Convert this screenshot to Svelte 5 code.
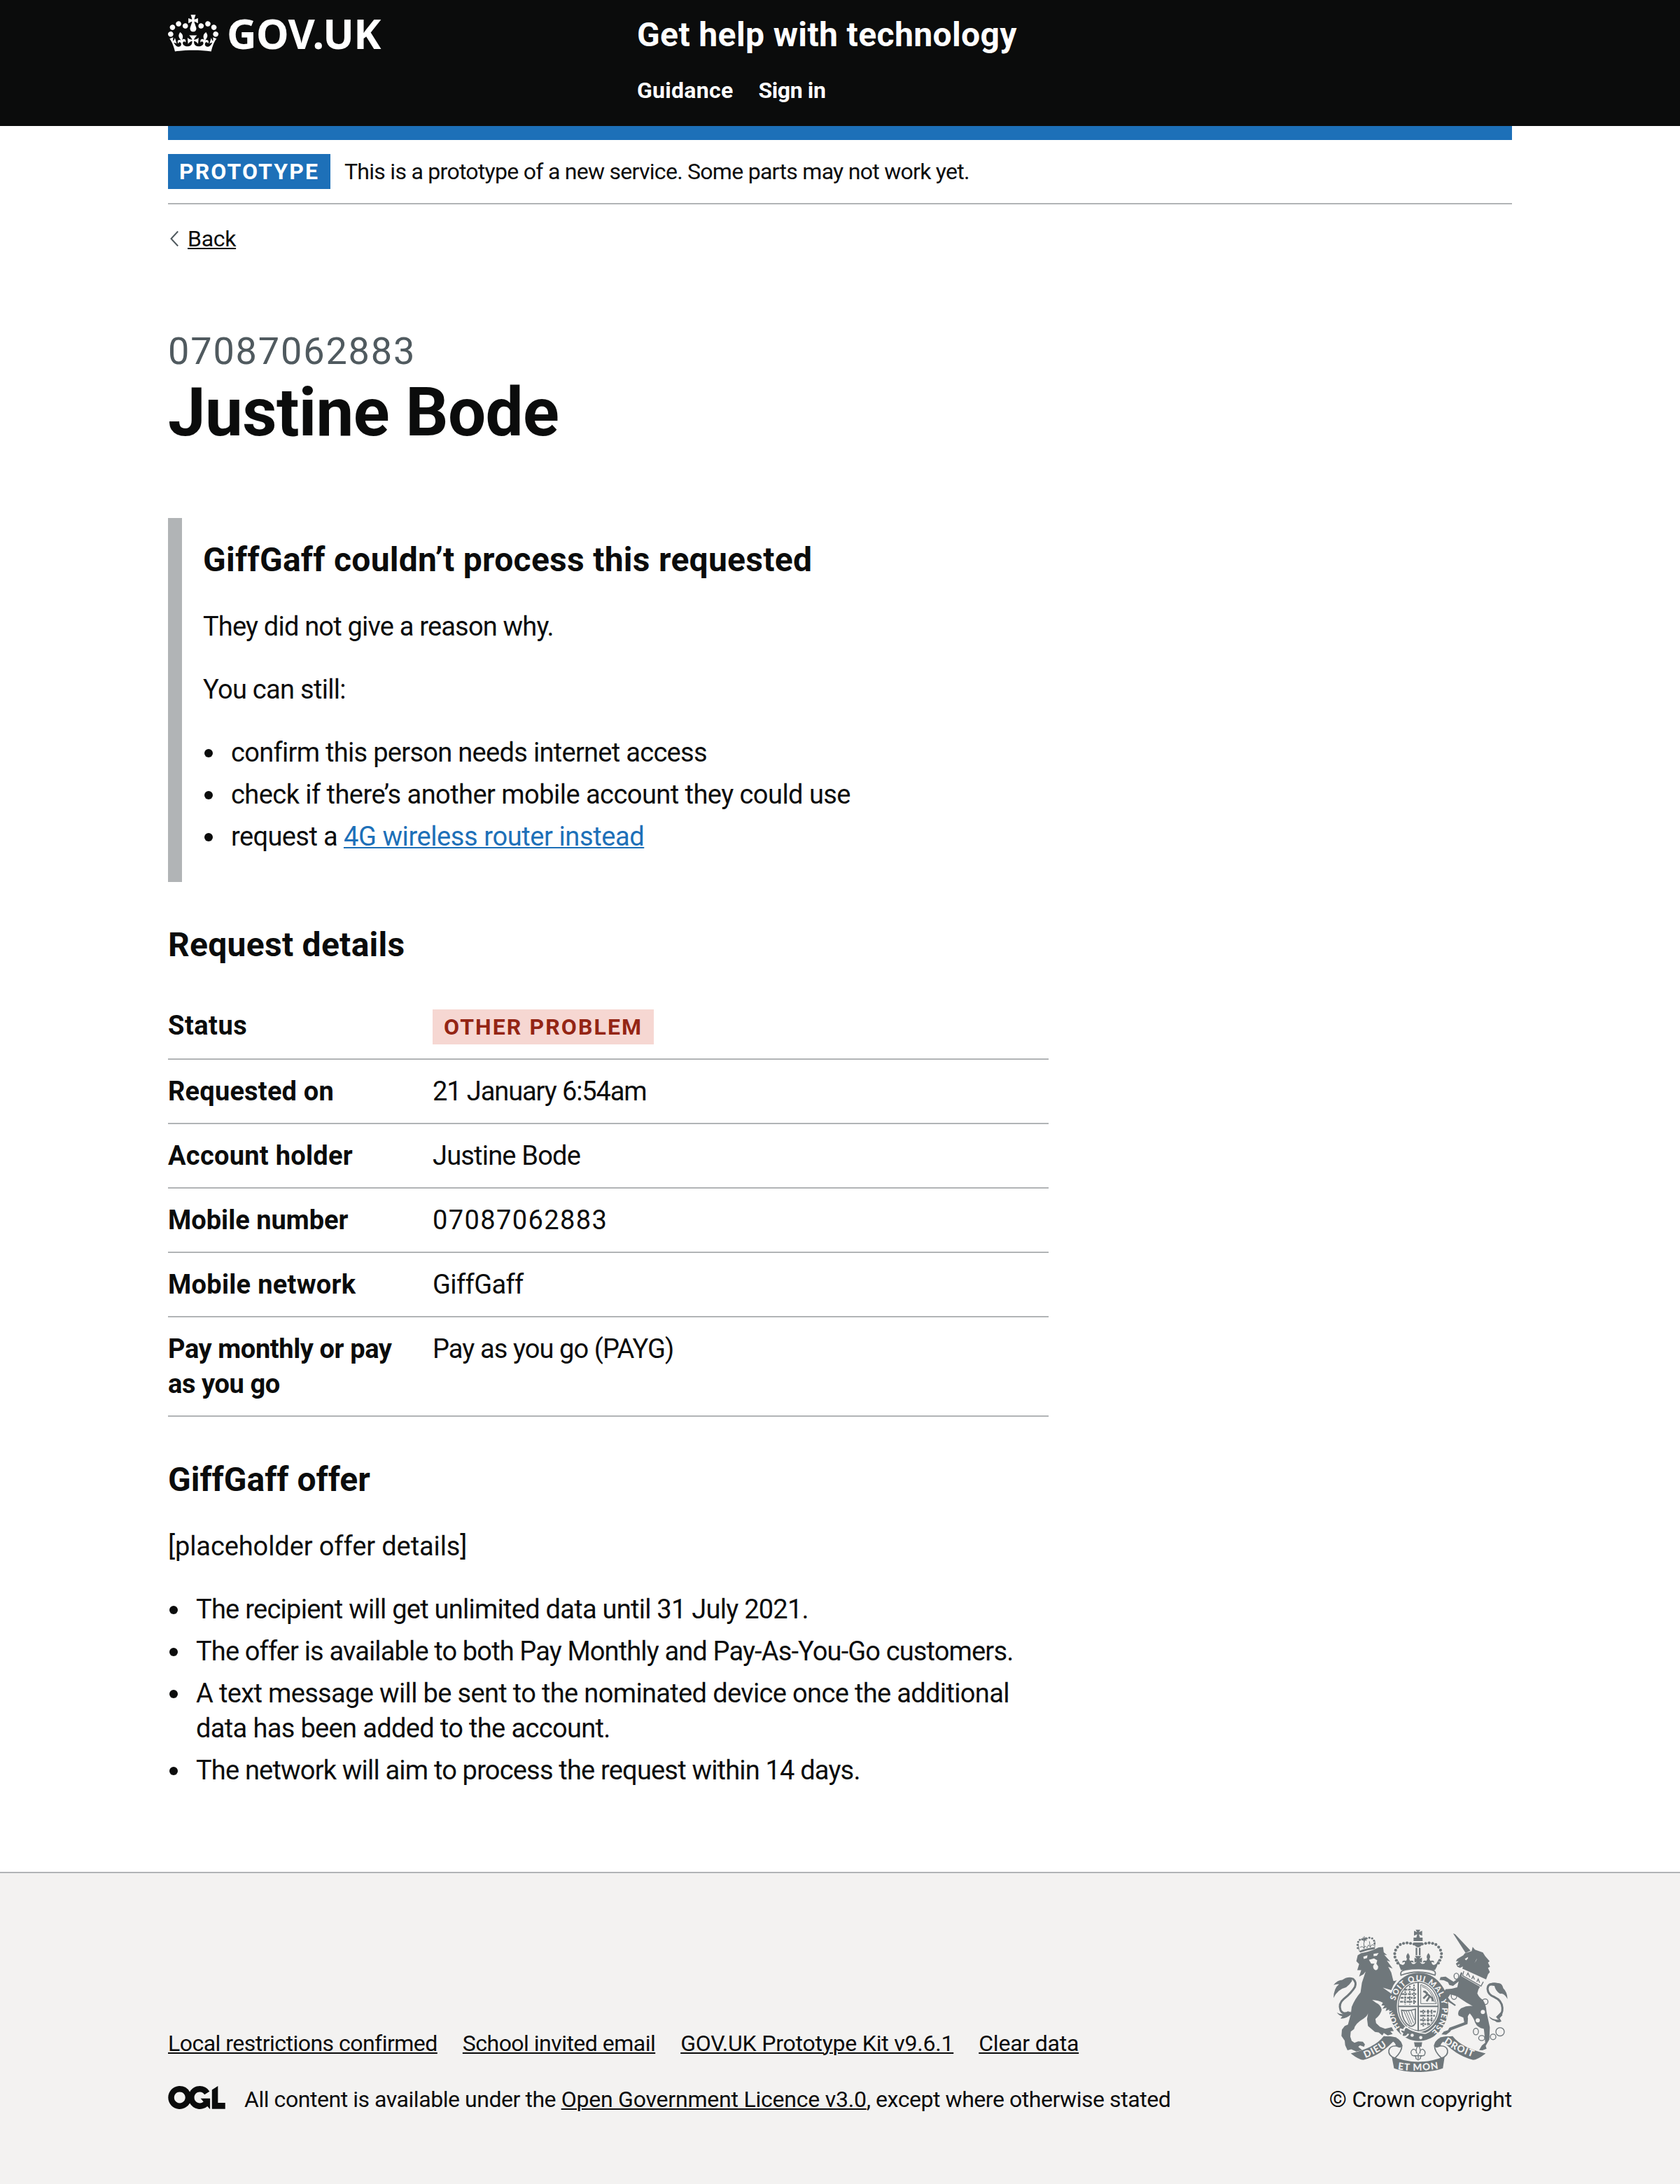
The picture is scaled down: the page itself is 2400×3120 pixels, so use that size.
<script>
  const stillOptions = [
    { text: 'confirm this person needs internet access', track: 'tight-7' },
    { text: 'check if there’s another mobile account they could use', track: 'tight-55' },
    { text: 'request a ', track: 'tight-6', link: '4G wireless router instead' }
  ];

  const details = [
    { key: 'Requested on', keyTrack: 'loose-2', value: '21 January 6:54am', track: 'tight-11' },
    { key: 'Account holder', keyTrack: 'loose-3', value: 'Justine Bode', track: 'tight-8' },
    { key: 'Mobile number', keyTrack: '', value: '07087062883', track: 'loose-14' },
    { key: 'Mobile network', keyTrack: 'loose-3', value: 'GiffGaff', track: 'tight-6' },
    { key: 'Pay monthly or pay as you go', keyTrack: 'tight-4', value: 'Pay as you go (PAYG)', track: 'tight-9' }
  ];

  const offer = [
    { text: 'The recipient will get unlimited data until 31 July 2021.', track: 'tight-75' },
    { text: 'The offer is available to both Pay Monthly and Pay-As-You-Go customers.', track: 'tight-85' },
    { text: 'A text message will be sent to the nominated device once the additional data has been added to the account.', track: 'tight-65' },
    { text: 'The network will aim to process the request within 14 days.', track: 'tight-8' }
  ];

  const footerLinks = [
    { text: 'Local restrictions confirmed', track: 'tight-5' },
    { text: 'School invited email', track: 'tight-5' },
    { text: 'GOV.UK Prototype Kit v9.6.1', track: 'tight-2' },
    { text: 'Clear data', track: 'tight-2' }
  ];

  // Pearls along the two arches of the imperial crown
  const pearls = [
    [420, 110], [405, 107], [390, 105], [375, 107], [361, 112], [349, 123], [341, 136], [337, 151], [338, 166], [344, 180], [350, 192]
  ];
  const lionPearls = [[178, 127], [177, 114], [180, 101], [187, 92], [197, 90], [216, 86], [228, 83], [240, 86], [248, 96], [250, 108]];
</script>

<header class="header">
  <div class="width header-inner">
    <a class="logo" href="#home">
      <svg class="crown" viewBox="0 0 132 97" aria-hidden="true">
        <path fill="currentColor" fill-rule="evenodd" d="M25 30.2c3.5 1.5 7.7-.2 9.1-3.7 1.5-3.6-.2-7.8-3.9-9.2-3.6-1.4-7.6.3-9.1 3.9-1.4 3.5.3 7.5 3.9 9zM9 39.5c3.6 1.5 7.8-.2 9.2-3.7 1.5-3.6-.2-7.8-3.9-9.1-3.6-1.5-7.6.2-9.1 3.8-1.4 3.5.3 7.5 3.8 9zM4.4 57.2c3.5 1.5 7.7-.2 9.1-3.8 1.5-3.6-.2-7.7-3.9-9.1-3.5-1.5-7.6.3-9.1 3.8-1.4 3.5.3 7.6 3.9 9.1zm38.3-21.4c3.5 1.5 7.7-.2 9.1-3.8 1.5-3.6-.2-7.7-3.9-9.1-3.6-1.5-7.6.3-9.1 3.8-1.3 3.6.4 7.7 3.9 9.1zm64.4-5.6c-3.6 1.5-7.8-.2-9.1-3.7-1.5-3.6.2-7.8 3.8-9.2 3.6-1.4 7.7.3 9.2 3.9 1.3 3.5-.4 7.5-3.9 9zm15.9 9.3c-3.6 1.5-7.7-.2-9.1-3.7-1.5-3.6.2-7.8 3.7-9.1 3.6-1.5 7.7.2 9.2 3.8 1.5 3.5-.3 7.5-3.8 9zm4.7 17.7c-3.6 1.5-7.8-.2-9.2-3.8-1.5-3.6.2-7.7 3.9-9.1 3.6-1.5 7.7.3 9.2 3.8 1.3 3.5-.4 7.6-3.9 9.1zM89.3 35.8c-3.6 1.5-7.8-.2-9.2-3.8-1.4-3.6.2-7.7 3.9-9.1 3.6-1.5 7.7.3 9.2 3.8 1.4 3.6-.3 7.7-3.9 9.1zM69.7 17.7l8.9 4.7V9.3l-8.9 2.8c-.2-.3-.5-.6-.9-.9L72.4 0H59.6l3.5 11.2c-.3.3-.6.5-.9.9l-8.8-2.8v13.1l8.8-4.7c.3.3.6.7.9.9l-5 15.4v.1c-.2.8-.4 1.6-.4 2.4 0 4.1 3.1 7.5 7 8.1h.2c.3 0 .7.1 1 .1.4 0 .7 0 1-.1h.2c4-.6 7.1-4.1 7.1-8.1 0-.8-.1-1.7-.4-2.4V34l-5.1-15.4c.4-.2.7-.6 1-.9zM66 92.8c16.9 0 32.8 1.1 47.1 3.2 4-16.9 8.9-26.7 14-33.5l-9.6-3.4c1 4.9 1.1 7.2 0 10.2-1.5-1.4-3-4.3-4.2-8.7L108.6 76c2.8-2 5-3.2 7.5-3.3-4.4 9.4-10 11.9-13.6 11.2-4.3-.8-6.3-4.6-5.6-7.9 1-4.7 5.7-5.9 8-.5 4.3-8.7-3-11.4-7.6-8.8 7.1-7.2 7.9-13.5 2.1-21.1-8 6.1-8.1 12.3-4.5 20.8-4.7-5.4-12.1-2.5-9.5 6.2 3.4-5.2 7.9-2 7.2 3.1-.6 4.3-6.4 7.8-13.5 7.2-10.3-.9-10.9-8-11.2-13.8 2.5-.5 7.1 1.8 11 7.3L80.2 60c-4.1 4.4-8 5.3-12.3 5.4 1.4-4.4 8-11.6 8-11.6H55.5s6.4 7.2 7.9 11.6c-4.2-.1-8-1-12.3-5.4l1.4 16.4c3.9-5.5 8.5-7.7 10.9-7.3-.3 5.8-.9 12.8-11.1 13.8-7.2.6-12.9-2.9-13.5-7.2-.7-5 3.8-8.3 7.1-3.1 2.7-8.7-4.6-11.6-9.4-6.2 3.7-8.5 3.6-14.7-4.6-20.8-5.8 7.6-5 13.9 2.2 21.1-4.7-2.6-11.9.1-7.7 8.8 2.3-5.5 7.1-4.2 8.1.5.7 3.3-1.3 7.1-5.7 7.9-3.5.7-9-1.8-13.5-11.2 2.5.1 4.7 1.3 7.5 3.3l-4.7-15.4c-1.2 4.4-2.7 7.2-4.3 8.7-1.1-3-.9-5.3 0-10.2l-9.5 3.4c5 6.9 9.9 16.7 14 33.5 14.8-2.1 30.8-3.2 47.7-3.2z" />
      </svg>
      <span class="logotype">GOV.UK</span>
    </a>
    <div class="header-content">
      <a class="service" href="#service">Get help with technology</a>
      <nav class="nav">
        <a class="loose-3" href="#guidance">Guidance</a>
        <a class="tight-4" href="#signin">Sign in</a>
      </nav>
    </div>
  </div>
</header>

<div class="width">
  <div class="bar"></div>
  <div class="phase">
    <strong class="tag">Prototype</strong>
    <span class="phase-text">This is a prototype of a new service. Some parts may not work yet.</span>
  </div>
  <a class="back" href="#back">
    <svg class="caret" viewBox="0 0 12 22" aria-hidden="true"><path d="M11.2 .5L1.5 11l9.7 10.5" fill="none" stroke="#505a5f" stroke-width="2" /></svg>
    <span>Back</span>
  </a>

  <main class="main">
    <span class="caption">07087062883</span>
    <h1>Justine Bode</h1>

    <section class="inset">
      <h2 class="loose-3">GiffGaff couldn’t process this requested</h2>
      <p class="tight-8">They did not give a reason why.</p>
      <p class="tight-7">You can still:</p>
      <ul>
        {#each stillOptions as item}
          <li class={item.track}><span>{item.text}{#if item.link}<a class="link tight-4" href="#router">{item.link}</a>{/if}</span></li>
        {/each}
      </ul>
    </section>

    <h2 class="loose-3">Request details</h2>
    <dl>
      <div class="row">
        <dt class="loose-5">Status</dt>
        <dd><strong class="tag tag-red">Other problem</strong></dd>
      </div>
      {#each details as d}
        <div class="row">
          <dt class={d.keyTrack}>{d.key}</dt>
          <dd class={d.track}>{d.value}</dd>
        </div>
      {/each}
    </dl>

    <h2>GiffGaff offer</h2>
    <p class="tight-1">[placeholder offer details]</p>
    <ul>
      {#each offer as item}
        <li class={item.track}><span>{item.text}</span></li>
      {/each}
    </ul>
  </main>
</div>

<footer class="footer">
  <div class="width footer-inner">
    <div class="meta">
      <nav class="meta-links">
        {#each footerLinks as l}
          <a class={l.track} href="#meta">{l.text}</a>
        {/each}
      </nav>
      <div class="licence">
        <svg class="ogl" viewBox="0 0 483.2 195.7" aria-hidden="true">
          <path fill="currentColor" d="M421.5 142.8V.1l-50.7 32.3v161.1h112.4v-50.7zm-122.3-9.6A47.12 47.12 0 0 1 221 97.8c0-26 21.1-47.1 47.1-47.1 16.7 0 31.4 8.7 39.7 21.8l42.7-27.2A97.63 97.63 0 0 0 268.1 0c-36.5 0-68.3 20.1-85.1 49.7A98 98 0 0 0 97.8 0C43.9 0 0 43.9 0 97.8s43.9 97.8 97.8 97.8c36.5 0 68.3-20.1 85.1-49.7a97.76 97.76 0 0 0 149.6 25.4l19.4 22.2h3v-87.8h-80l24.3 27.5zM97.8 145c-26 0-47.1-21.1-47.1-47.1s21.1-47.1 47.1-47.1 47.1 21.1 47.1 47.1S123.8 145 97.8 145" />
        </svg>
        <span class="tight-45">{'All content is available under the '}<a class="tight-2" href="#ogl">Open Government Licence v3.0</a>, except where otherwise stated</span>
      </div>
    </div>

    <a class="copyright" href="#copyright">
      <svg class="arms" viewBox="72 46 750 614" aria-hidden="true">
        <defs>
          <path id="garter" d="M360 468A103 120 0 1 1 500 484" />
          <path id="dieu" d="M211 600Q270 578 330 528" />
          <path id="mon" d="M350 648Q437 662 540 643" />
          <path id="droit" d="M547 533Q602 574 700 606" />
        </defs>

        <g fill="#6f777b">
          <!-- lion -->
          <path d="M192 149Q238 140 268 124L287 123 290 145 304 157 292 156 318 185 303 181 328 215 309 208 322 232 331 268Q336 270 346 265Q330 285 322 308L286 297 321 322Q342 350 350 380Q350 400 340 408L326 400 314 406 316 390 298 398 302 384 284 388 294 374 280 374 286 362Q268 352 240 350L256 362Q278 372 281 392Q278 412 254 432L257 450 274 466 296 474 324 467 333 484 318 485 328 497 307 503 290 492 284 503 268 490 252 488 222 462 218 432 224 400Q224 416 204 430Q166 452 162 476L148 486 146 508 152 526 164 534 180 528 200 530 209 541 205 552 188 546 180 552 197 566 172 572 150 562 134 567 124 545 122 525 108 505 110 478 122 462 136 456 148 412 152 380Q166 346 190 318L196 276 212 228 202 240 184 250 193 222 176 222 184 196 172 184 178 158Z" />
          <path d="M74 342Q74 300 98 282Q84 282 74 286Q92 262 116 264Q140 264 148 256L154 268Q142 286 128 296Q92 304 74 342Z" />
          <path d="M88 404Q112 420 146 400L152 410Q128 432 104 430L112 420Q98 418 88 404Z" />
          <path d="M183 140Q218 126 254 123L251 127 253 131Q218 135 189 146Z" />
        </g>
        <path d="M112 270Q134 252 158 260Q174 274 166 294Q152 318 118 346Q94 366 104 394Q114 416 140 402" fill="none" stroke="#6f777b" stroke-width="9" />
        <g fill="#6f777b">
          <path d="M184 138L180 108M251 122L252 98M204 104L206 130M228 98L232 124M188 124L198 120 204 128 210 118 218 126 224 114 232 122 240 112 248 116M206 76V104" fill="none" stroke="#6f777b" stroke-width="3" />
          {#each lionPearls as [x, y]}<circle cx={x} cy={y} r="4.5" />{/each}
          <path d="M198 80L206 84 214 80 212 88 218 96 208 94 206 104 202 94 194 94 202 89Z" />

          <!-- imperial crown -->
          <path d="M427 48H447L441 59 455 53V74L441 68 445 82H457V97H418V82H430L434 68 420 74V53L433 59Z" />
          <path d="M418 103H457Q453 122 438 124Q422 122 418 103Z" />
          <path d="M427 126H434V158H427zM441 126H448V158H441z" />
          {#each pearls as [x, y]}<circle cx={x} cy={y} r="6.3" /><circle cx={875 - x} cy={y} r="6.3" />{/each}
          <path d="M347 174L360 196 372 200Q384 196 380 186L370 190Q368 178 386 182L390 174Q382 162 394 148Q406 162 399 174L403 182Q420 178 418 190L408 187Q410 200 424 194L432 186 422 190V168L432 174 424 161H451L443 174 454 168V190L444 186 452 194Q466 198 468 187L458 190Q458 178 473 182L477 174Q470 162 482 148Q494 162 486 174L490 182Q508 178 506 190L496 186Q494 198 506 200L516 194 529 172 518 207 510 222Q437 208 364 222L358 208Z" />

          <!-- garter -->
          <ellipse cx="440" cy="380" rx="128" ry="147" />
        </g>
        <path d="M364 244Q358 224 384 220Q438 212 492 220Q518 224 510 244Q438 216 364 244Z" fill="#f3f2f1" stroke="#6f777b" stroke-width="5" />
        <ellipse cx="438" cy="378" rx="90" ry="108" fill="#6f777b" stroke="#f3f2f1" stroke-width="4" />
        <ellipse cx="438" cy="378" rx="84" ry="102" fill="#f3f2f1" />
        <g fill="none" stroke="#6f777b" stroke-width="6">
          <path d="M438 274V484M352 378H524" />
          <path stroke-width="7" stroke-dasharray="13 3 8 4" d="M378 306H428M366 325H430M362 341H428M360 358H430M446 400H514M446 418H510M446 436H504M448 454H492" />
          <path stroke-width="6" stroke-dasharray="7 4" d="M382 302V370M402 290V370M420 284V370M460 392V464M480 392V460M496 392V450" />
          <path stroke-width="3" d="M450 284Q502 298 516 366H449V284M454 292Q494 304 508 360" />
          <path stroke-width="8" d="M460 344L478 326 466 312M478 326L498 342 500 356M488 334L474 356M460 312L478 322" />
          <path stroke-width="5" d="M364 394Q398 400 426 390V450Q414 470 398 460Q372 444 366 394" />
          <path stroke-width="3" d="M376 398L402 456M386 398L410 456M396 397L418 450M408 395L422 436" />
        </g>

        <!-- garter buckle and pendant -->
        <path d="M396 468Q378 464 376 480L362 476Q360 490 370 494L366 506Q386 514 396 496" fill="none" stroke="#f3f2f1" stroke-width="7" />
        <path d="M470 494Q500 480 514 458M396 472Q430 492 470 494" fill="none" stroke="#f3f2f1" stroke-width="5" />
        <g fill="#f3f2f1"><circle cx="412" cy="502" r="7" /><circle cx="449" cy="512" r="7" /></g>
        <text class="motto garter"><textPath href="#garter">HON</textPath></text>
        <text class="motto garter wide"><textPath href="#garter" startOffset="120">SOIT QUI MAL Y PENSE</textPath></text>
        <path d="M326 396L316 408 330 404 342 408 338 394Z" fill="#6f777b" />
        <path d="M420 532H455L452 552H424Z" fill="#6f777b" />
        <path d="M438 546Q452 562 444 580Q446 562 458 562Q474 572 464 588L458 590Q446 590 448 602L438 608 428 602Q430 590 418 590L412 588Q400 572 416 562Q430 562 432 580Q424 562 438 546ZM420 590H456M438 580V604" fill="#f3f2f1" stroke="#6f777b" stroke-width="4" />

        <g fill="#6f777b">
          <!-- unicorn -->
          <path d="M588 64L597 68 663 138 642 148Z" />
          <path d="M638 150L668 140 672 122 682 134 716 146 726 162 745 184 738 190 747 208 738 212 746 230 738 240 730 262 634 218 Q688 196 690 172Q680 204 640 219L628 217 630 206 618 212 607 208 600 194 612 184 600 184 606 174 632 158Z" />
          <path d="M622 230L706 290Q694 306 692 322Q700 340 716 350Q730 370 732 402L740 440 746 468 744 520 728 548 732 560 714 567 700 566 712 546 726 534 722 490 720 474Q692 470 682 446Q678 430 660 408Q648 420 652 430L650 454 580 480 574 488 558 500 538 498 548 486 566 480 572 470 636 446 632 426 612 418Q604 402 622 386Q646 374 672 376L646 362 604 334 576 326 566 340 576 354 600 372 596 376 580 366 560 354 554 330 548 318 556 304 582 302 606 296 612 270 588 290 572 286 566 274 548 266 530 264 534 252 556 250 574 262 590 272 612 256Z" />
          <path d="M740 290Q752 270 780 278Q798 276 804 300Q820 314 822 346Q806 318 790 324Q770 312 766 290Q752 286 740 290Z" />
          <path d="M742 420Q762 438 784 434Q782 426 772 424L796 400 800 416 788 428 796 442Q780 452 768 440Q748 436 742 420Z" />
        </g>
        <path d="M772 284Q738 274 736 302Q738 328 766 338Q798 352 800 384Q802 412 778 430" fill="none" stroke="#6f777b" stroke-width="9" />
        <g fill="#f3f2f1">
          <path d="M246 152L268 148 260 160 246 162ZM202 164L220 158 218 170 204 174ZM226 178L248 172 262 180 258 194 266 206Q266 222 254 222 244 218 244 204L250 194 236 194Z" />
          <path d="M638 174L652 166 652 172 644 180ZM606 200L618 196 612 204Z" />
        </g>
        <path d="M632 224L624 248 708 296 722 272L712 268 704 280 698 262 686 272 680 254 668 262 664 244 650 250 646 232Z" fill="#f3f2f1" />
        <path d="M634 226L629 246 708 291 718 272M646 246L652 234 660 252M668 260L674 248 680 262M690 272L696 260 702 276" fill="none" stroke="#6f777b" stroke-width="4" />

        <!-- chain -->
        <g fill="none" stroke="#6f777b" stroke-width="4">
          <ellipse cx="602" cy="248" rx="10" ry="13" />
          <ellipse cx="592" cy="332" rx="12" ry="16" />
          <circle cx="726" cy="358" r="12" />
          <ellipse cx="686" cy="486" rx="11" ry="14" />
          <ellipse cx="711" cy="514" rx="13" ry="11" />
          <circle cx="760" cy="509" r="12" />
          <circle cx="790" cy="487" r="18" />
        </g>
        <g fill="#f3f2f1"><circle cx="716" cy="402" r="9" /><circle cx="694" cy="438" r="9" /></g>

        <!-- motto ribbon -->
        <g fill="#6f777b">
          <path d="M148 580Q250 558 290 506L346 512Q280 590 202 608Q184 608 148 580Z" />
          <path d="M728 580Q626 558 586 506L530 512Q596 590 674 608Q692 608 728 580Z" />
          <path d="M324 592Q438 640 552 592L544 644Q500 660 438 660Q374 660 334 644Z" />
        </g>
        <g fill="#f3f2f1" stroke="#6f777b" stroke-width="5">
          <path d="M326 512Q360 514 368 546Q368 574 338 600Q308 590 312 566Q318 546 344 548Q346 526 326 512Z" />
          <path d="M550 512Q516 514 508 546Q508 574 538 600Q568 590 564 566Q558 546 532 548Q530 526 550 512Z" />
        </g>
        <path d="M290 508Q354 498 370 546Q366 562 344 550Q340 530 318 524ZM586 508Q522 498 506 546Q510 562 532 550Q536 530 558 524Z" fill="#6f777b" />
        <g class="motto" fill="#f3f2f1">
          <text><textPath href="#dieu">DIEU</textPath></text>
          <text><textPath href="#mon">ET MON</textPath></text>
          <text><textPath href="#droit">DROIT</textPath></text>
        </g>
      </svg>
      <span class="tight-2">© Crown copyright</span>
    </a>
  </div>
</footer>

<style>
  :global(body) {
    margin: 0;
    background: #fff;
    color: #0b0c0c;
    font-family: Roboto, 'Liberation Sans', sans-serif;
    font-size: 38px;
    line-height: 50px;
  }
  a { color: inherit; text-decoration: none; }
  h1, h2, p, ul, dl, dd { margin: 0; padding: 0; }
  .width { width: 1920px; margin: 0 auto; }

  .header { background: #0b0c0c; color: #fff; height: 180px; }
  .header-inner { display: flex; font-weight: 700; }
  .logo { display: flex; width: 670px; padding-top: 17px; box-sizing: border-box; }
  .crown { width: 72px; height: 53px; margin: 4px 12px 0 0; }
  .logotype { font-family: 'Noto Sans', sans-serif; font-size: 59px; line-height: 60px; letter-spacing: -0.6px; }
  .header-content { padding-top: 20px; }
  .service { display: block; font-size: 48px; line-height: 60px; letter-spacing: 0.38px; }
  .nav { display: flex; gap: 36px; margin-top: 29px; font-size: 32px; line-height: 40px; }

  .bar { height: 20px; background: #1d70b8; }
  .phase { display: flex; align-items: center; gap: 20px; padding: 20px 0; border-bottom: 2px solid #b1b4b6; }
  .phase-text { font-size: 32px; line-height: 40px; letter-spacing: -0.72px; }
  .tag {
    display: block;
    width: max-content;
    height: 50px;
    padding: 0 16px;
    box-sizing: border-box;
    background: #1d70b8;
    color: #fff;
    font-size: 32px;
    font-weight: 700;
    line-height: 50px;
    letter-spacing: 2.1px;
    text-transform: uppercase;
  }
  .tag-red { background: #f6d7d2; color: #942514; margin-top: 2px; }
  .back { display: flex; align-items: center; width: max-content; margin-top: 29px; padding-left: 3px; gap: 13px; font-size: 32px; line-height: 40px; letter-spacing: -0.3px; }
  .back span { text-decoration: underline; text-decoration-thickness: 2px; text-underline-offset: 2px; }
  .caret { width: 12px; height: 22px; }

  .main { width: 1258px; padding: 111px 0 110px; }
  .caption { display: block; margin-bottom: 7px; color: #505a5f; font-size: 54px; line-height: 60px; letter-spacing: 1.85px; }
  h1 { margin-bottom: 101px; font-size: 96px; font-weight: 700; line-height: 100px; letter-spacing: -0.6px; }
  h2 { margin-bottom: 40px; font-size: 48px; font-weight: 700; line-height: 60px; }
  p { margin-bottom: 40px; }
  ul { list-style: none; }
  li { display: flex; margin-bottom: 10px; }
  li::before { content: ''; flex: none; width: 12px; height: 12px; margin: 20px 26px 0 2px; border-radius: 50%; background: #0b0c0c; }
  li span { white-space: pre-wrap; }
  .link { color: #1d70b8; text-decoration: underline; text-decoration-thickness: 2px; text-underline-offset: 2px; }
  .inset { margin-bottom: 60px; padding: 30px 30px 20px; border-left: 20px solid #b1b4b6; }
  .inset ul { padding-bottom: 10px; }

  dl { margin-bottom: 60px; }
  .row { display: flex; padding: 20px 0; border-bottom: 2px solid #b1b4b6; }
  dt { width: 338px; margin-right: 40px; font-weight: 700; }

  .footer { border-top: 2px solid #b1b4b6; background: #f3f2f1; height: 444px; font-size: 32px; line-height: 40px; }
  .footer-inner { display: flex; justify-content: space-between; align-items: flex-end; padding-top: 80px; }
  .meta-links { display: flex; gap: 36px; margin-bottom: 40px; }
  .meta-links a, .licence a { text-decoration: underline; text-decoration-thickness: 2px; text-underline-offset: 2px; }
  .licence { display: flex; gap: 27px; }
  .licence span { white-space: pre; }
  .ogl { width: 82px; height: 33px; margin-top: 1px; }
  .copyright { display: flex; flex-direction: column; align-items: center; gap: 19px; white-space: nowrap; }
  .arms { width: 250px; height: 204px; }
  .motto { font-family: Lato, sans-serif; font-weight: 900; font-size: 41px; letter-spacing: 3px; }
  .garter { font-size: 34px; letter-spacing: 0; fill: #f3f2f1; }
  .wide { letter-spacing: 3px; }

  /* Tracking adjustments per line of text */
  .tight-1 { letter-spacing: -0.1px; }
  .tight-2 { letter-spacing: -0.22px; }
  .tight-4 { letter-spacing: -0.4px; }
  .tight-45 { letter-spacing: -0.45px; }
  .tight-5 { letter-spacing: -0.52px; }
  .tight-55 { letter-spacing: -0.54px; }
  .tight-6 { letter-spacing: -0.6px; }
  .tight-65 { letter-spacing: -0.65px; }
  .tight-7 { letter-spacing: -0.7px; }
  .tight-75 { letter-spacing: -0.74px; }
  .tight-8 { letter-spacing: -0.81px; }
  .tight-85 { letter-spacing: -0.86px; }
  .tight-9 { letter-spacing: -0.9px; }
  .tight-11 { letter-spacing: -1.1px; }
  .loose-2 { letter-spacing: 0.2px; }
  .loose-3 { letter-spacing: 0.28px; }
  .loose-5 { letter-spacing: 0.5px; }
  .loose-14 { letter-spacing: 1.4px; }
</style>
